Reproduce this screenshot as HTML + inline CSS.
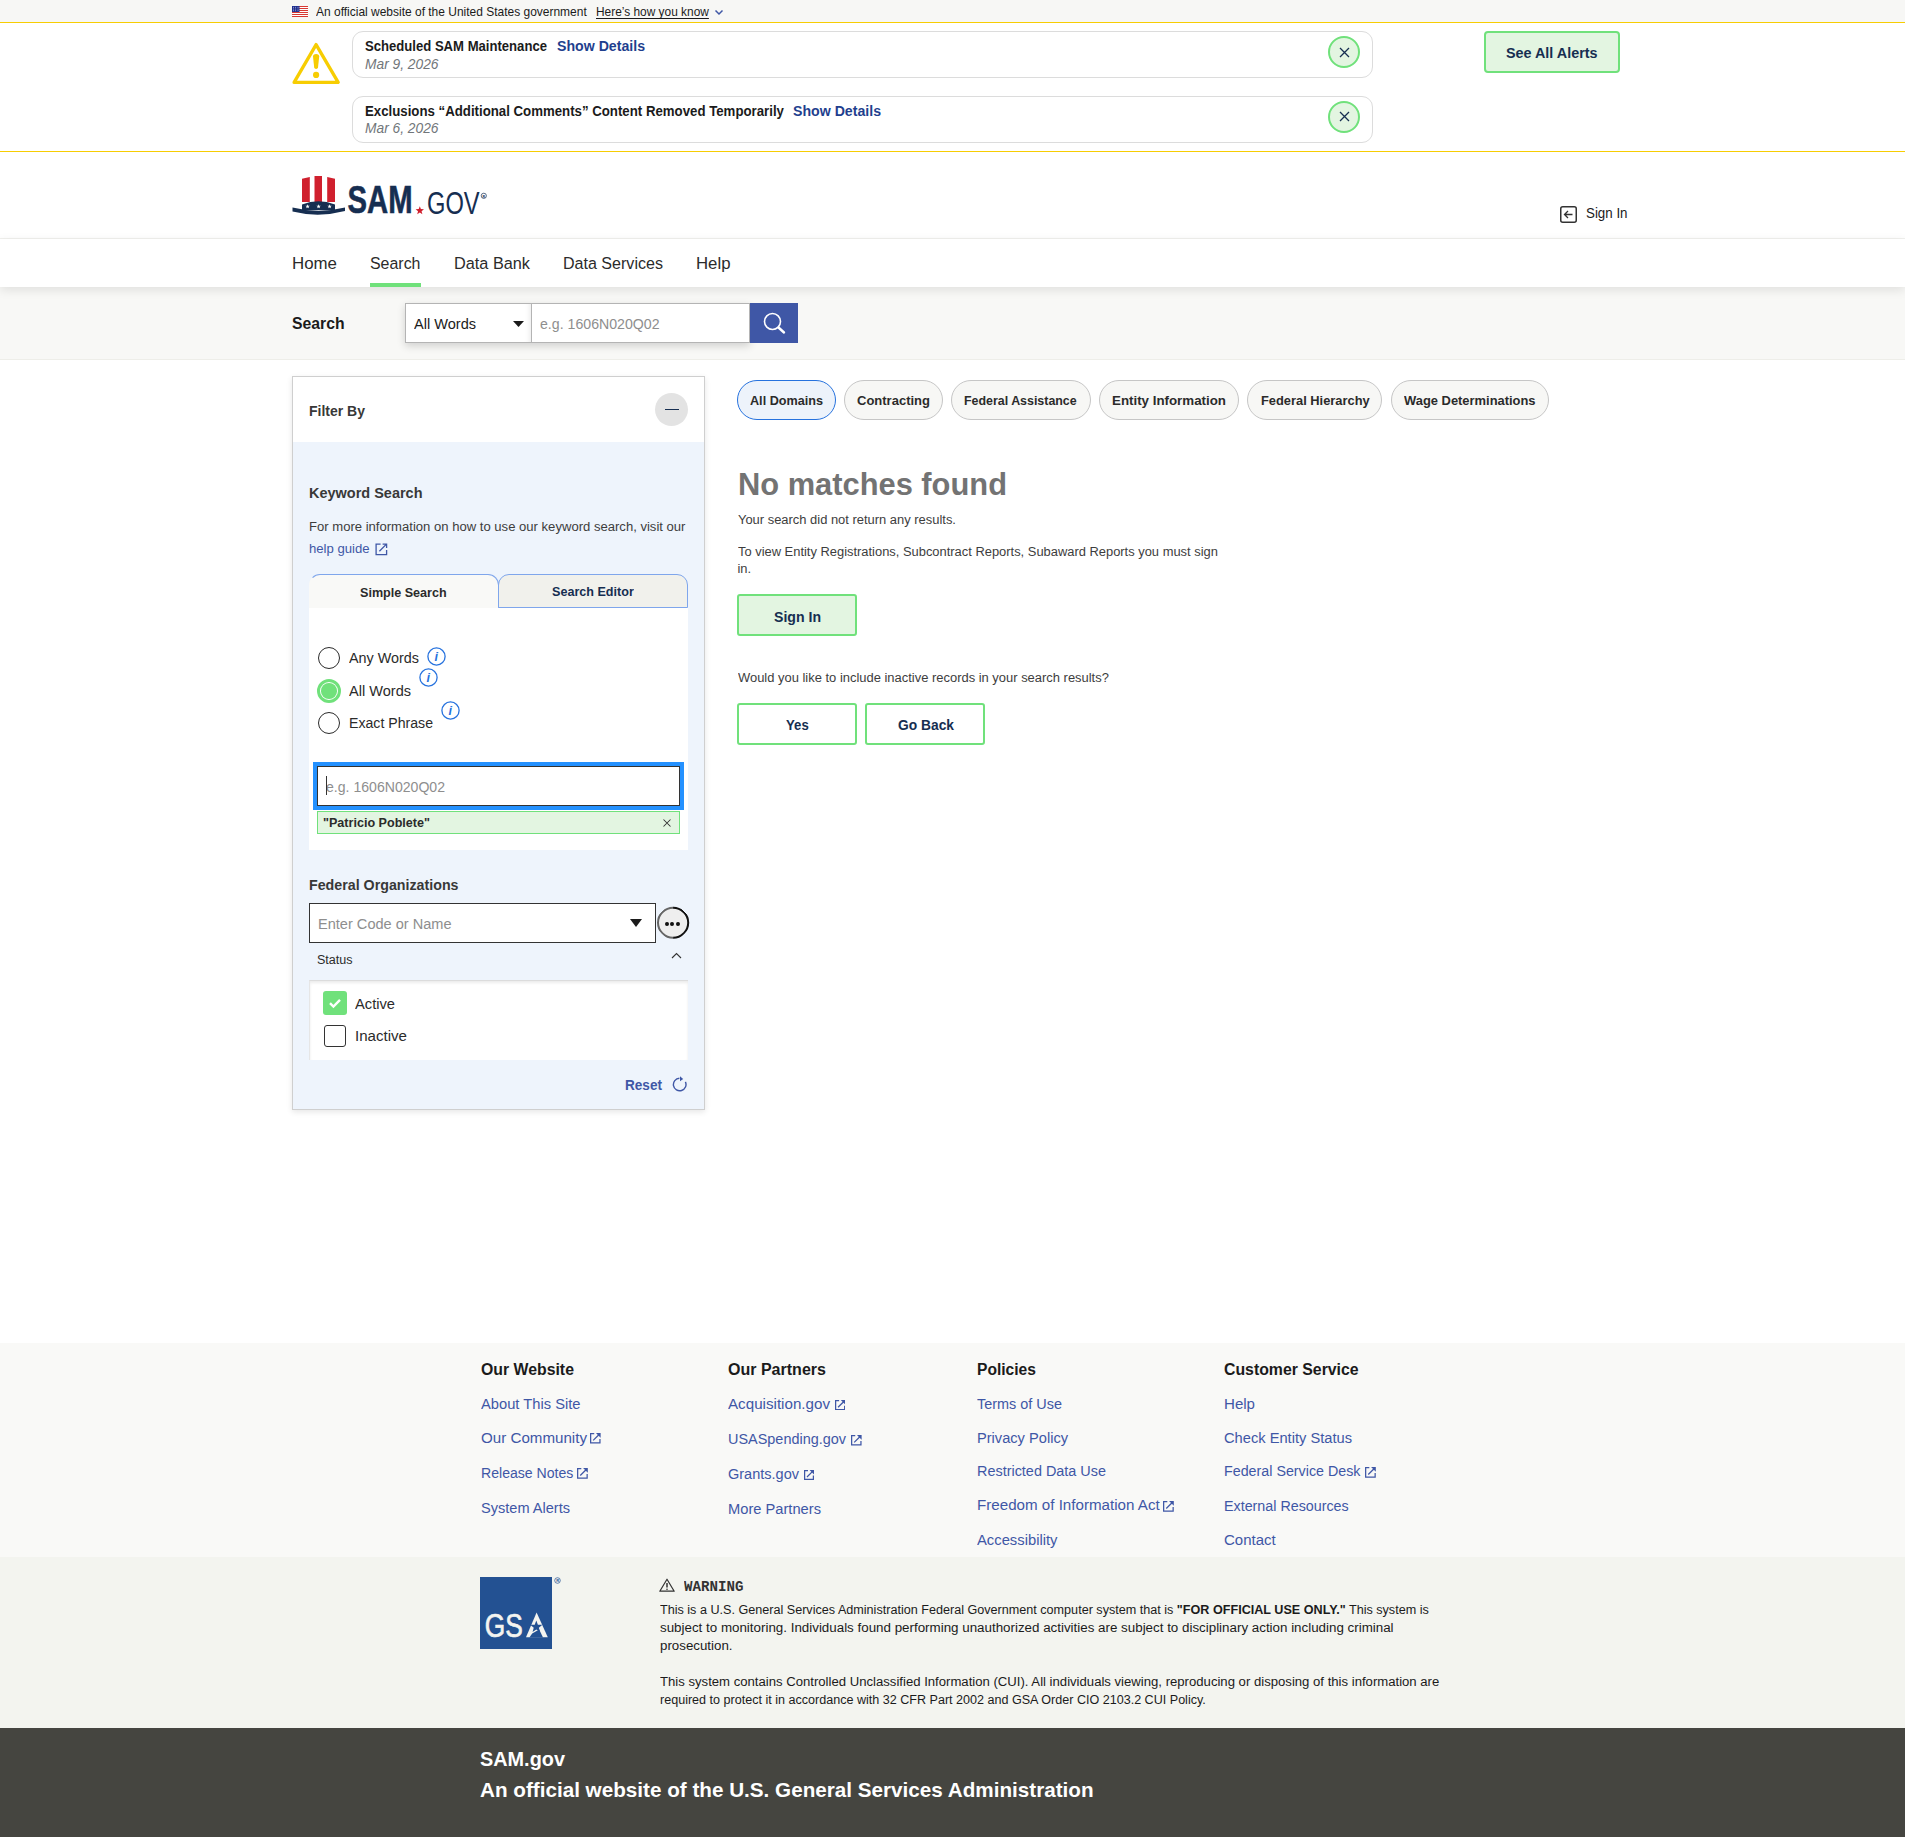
<!DOCTYPE html>
<html><head><meta charset="utf-8"><style>
html,body{margin:0;padding:0}
body{width:1905px;height:1837px;position:relative;overflow:hidden;background:#fff;font-family:"Liberation Sans",sans-serif}
.t{position:absolute;white-space:pre}
.b{position:absolute}
</style></head><body>
<div class="b" style="left:0.0px;top:0.0px;width:1905.0px;height:22.0px;background:#f7f7f5"></div>
<div class="b" style="left:0.0px;top:22.0px;width:1905.0px;height:1.0px;background:#f7cd02"></div>
<svg class="b" style="left:292.0px;top:6.0px;" width="16.0" height="11.0" viewBox="0 0 16.0 11.0"><rect width="16" height="11" fill="#fff"/><rect y="0" width="16" height="1" fill="#d83933"/><rect y="2" width="16" height="1" fill="#d83933"/><rect y="4" width="16" height="1" fill="#d83933"/><rect y="6" width="16" height="1" fill="#d83933"/><rect y="8" width="16" height="1" fill="#d83933"/><rect y="10" width="16" height="1" fill="#d83933"/><rect width="7.5" height="6" fill="#1f2f8f"/><circle cx="1.4" cy="1.2" r="0.45" fill="#fff"/><circle cx="3.6999999999999997" cy="1.2" r="0.45" fill="#fff"/><circle cx="6.0" cy="1.2" r="0.45" fill="#fff"/><circle cx="1.4" cy="3.0" r="0.45" fill="#fff"/><circle cx="3.6999999999999997" cy="3.0" r="0.45" fill="#fff"/><circle cx="6.0" cy="3.0" r="0.45" fill="#fff"/><circle cx="1.4" cy="4.8" r="0.45" fill="#fff"/><circle cx="3.6999999999999997" cy="4.8" r="0.45" fill="#fff"/><circle cx="6.0" cy="4.8" r="0.45" fill="#fff"/></svg>
<div class="t" style="left:316.0px;top:6.0px;font:normal normal 11.98px/11.98px 'Liberation Sans';color:#1b1b1b;transform:scaleX(1.0007);transform-origin:0 0;">An official website of the United States government</div>
<div class="t" style="left:596.0px;top:6.0px;font:normal normal 11.98px/11.98px 'Liberation Sans';color:#1b1b1b;transform:scaleX(0.9943);transform-origin:0 0;text-decoration:underline;text-underline-offset:2px">Here’s how you know</div>
<svg class="b" style="left:714.0px;top:9.0px;" width="10.0" height="7.0" viewBox="0 0 10.0 7.0"><path d="M1.5 1.5 L5 5 L8.5 1.5" fill="none" stroke="#3f57a6" stroke-width="1.5"/></svg>
<div class="b" style="left:0.0px;top:151.0px;width:1905.0px;height:1.0px;background:#f7cd02"></div>
<svg class="b" style="left:292.0px;top:41.0px;" width="49.0" height="44.0" viewBox="0 0 49.0 44.0"><path d="M24.1 3.6 L46.2 41.4 L2.1 41.4 Z" fill="none" stroke="#f7cd02" stroke-width="3.3" stroke-linejoin="round"/><path d="M21 15.6 Q21 13 24.1 13 Q27.2 13 27.2 15.6 L26 26.6 Q25.8 28 24.1 28 Q22.4 28 22.2 26.6 Z" fill="#f7cd02"/><circle cx="24.1" cy="33.9" r="3.1" fill="#f7cd02"/></svg>
<div class="b" style="left:352.0px;top:31.0px;width:1021.0px;height:47.0px;border:1px solid #dcdcdc;border-radius:11px;box-sizing:border-box"></div>
<div class="t" style="left:365.0px;top:40.0px;font:normal bold 13.83px/13.83px 'Liberation Sans';color:#1b1b1b;transform:scaleX(0.9473);transform-origin:0 0;">Scheduled SAM Maintenance</div>
<div class="t" style="left:556.8px;top:40.0px;font:normal bold 13.83px/13.83px 'Liberation Sans';color:#1f3f8e;transform:scaleX(1.0224);transform-origin:0 0;">Show Details</div>
<div class="t" style="left:365.0px;top:58.0px;font:italic normal 13.83px/13.83px 'Liberation Sans';color:#71767a;transform:scaleX(0.9959);transform-origin:0 0;">Mar 9, 2026</div>
<div class="b" style="left:1328.0px;top:36.0px;width:32.0px;height:32.0px;border:2px solid #70e17b;border-radius:50%;box-sizing:border-box;background:#e3f5e1"></div>
<svg class="b" style="left:1338.5px;top:46.5px;" width="11.0" height="11.0" viewBox="0 0 11.0 11.0"><path d="M1 1 L10 10 M10 1 L1 10" stroke="#162e51" stroke-width="1.3"/></svg>
<div class="b" style="left:352.0px;top:95.5px;width:1021.0px;height:47.0px;border:1px solid #dcdcdc;border-radius:11px;box-sizing:border-box"></div>
<div class="t" style="left:365.0px;top:105.0px;font:normal bold 13.83px/13.83px 'Liberation Sans';color:#1b1b1b;transform:scaleX(0.9571);transform-origin:0 0;">Exclusions “Additional Comments” Content Removed Temporarily</div>
<div class="t" style="left:792.8px;top:105.0px;font:normal bold 13.83px/13.83px 'Liberation Sans';color:#1f3f8e;transform:scaleX(1.0224);transform-origin:0 0;">Show Details</div>
<div class="t" style="left:365.0px;top:122.0px;font:italic normal 13.83px/13.83px 'Liberation Sans';color:#71767a;transform:scaleX(0.9959);transform-origin:0 0;">Mar 6, 2026</div>
<div class="b" style="left:1328.0px;top:100.5px;width:32.0px;height:32.0px;border:2px solid #70e17b;border-radius:50%;box-sizing:border-box;background:#e3f5e1"></div>
<svg class="b" style="left:1338.5px;top:111.0px;" width="11.0" height="11.0" viewBox="0 0 11.0 11.0"><path d="M1 1 L10 10 M10 1 L1 10" stroke="#162e51" stroke-width="1.3"/></svg>
<div class="b" style="left:1484.0px;top:31.0px;width:136.0px;height:42.0px;border:2px solid #70e17b;border-radius:4px;box-sizing:border-box;background:#e3f5e1"></div>
<div class="t" style="left:1506.4px;top:46.0px;font:normal bold 14.75px/14.75px 'Liberation Sans';color:#162e51;transform:scaleX(0.9734);transform-origin:0 0;">See All Alerts</div>
<svg class="b" style="left:292.0px;top:165.0px;" width="200.0" height="55.0" viewBox="0 0 200.0 55.0"><path d="M10 13.8 L17.8 12 V37 H10 Z" fill="#d0202e"/><path d="M22.5 11 H30 V37 H22.5 Z" fill="#d0202e"/><path d="M35.2 12 L43 13.8 V37 H35.2 Z" fill="#d0202e"/><path d="M10 45 V39.5 Q26.5 33 43 39.5 V45 Z" fill="#162e51"/><path d="M0.5 42.5 Q26.5 49 53 42.5 L53 46 Q26.5 53 0.5 46.5 Z" fill="#162e51"/><polygon points="15.60,39.20 16.17,40.72 17.79,40.79 16.52,41.80 16.95,43.36 15.60,42.47 14.25,43.36 14.68,41.80 13.41,40.79 15.03,40.72" fill="#fff"/><polygon points="26.60,39.20 27.17,40.72 28.79,40.79 27.52,41.80 27.95,43.36 26.60,42.47 25.25,43.36 25.68,41.80 24.41,40.79 26.03,40.72" fill="#fff"/><polygon points="37.60,39.20 38.17,40.72 39.79,40.79 38.52,41.80 38.95,43.36 37.60,42.47 36.25,43.36 36.68,41.80 35.41,40.79 37.03,40.72" fill="#fff"/><polygon points="127.80,41.20 128.89,44.10 131.98,44.24 129.56,46.17 130.39,49.16 127.80,47.45 125.21,49.16 126.04,46.17 123.62,44.24 126.71,44.10" fill="#d0202e"/><text x="55.6" y="47.6" font-family="Liberation Sans" font-weight="bold" font-size="39.5" fill="#162e51" stroke="#162e51" stroke-width="0.6" textLength="65" lengthAdjust="spacingAndGlyphs">SAM</text><text x="135" y="48.5" font-family="Liberation Sans" font-size="31" fill="#162e51" stroke="#fff" stroke-width="0.9" paint-order="stroke" textLength="52.6" lengthAdjust="spacingAndGlyphs">GOV</text><circle cx="191.8" cy="30.8" r="2.6" fill="none" stroke="#162e51" stroke-width="0.7"/><text x="190.4" y="32.6" font-family="Liberation Sans" font-weight="bold" font-size="3.6" fill="#162e51">R</text></svg>
<svg class="b" style="left:1560.0px;top:206.0px;" width="17.0" height="17.0" viewBox="0 0 17.0 17.0"><rect x="0.75" y="0.75" width="15.5" height="15.5" rx="2" fill="none" stroke="#333" stroke-width="1.5"/><path d="M12.5 8.5 H4.5 M8 5 L4.5 8.5 L8 12" fill="none" stroke="#333" stroke-width="1.3"/></svg>
<div class="t" style="left:1586.0px;top:206.0px;font:normal normal 14.75px/14.75px 'Liberation Sans';color:#1b1b1b;transform:scaleX(0.9037);transform-origin:0 0;">Sign In</div>
<div class="b" style="left:0.0px;top:238.0px;width:1905.0px;height:1.0px;background:#f1f1ee"></div>
<div class="b" style="left:0.0px;top:239.0px;width:1905.0px;height:48.0px;background:#fff;box-shadow:0 3px 10px rgba(0,0,0,0.10);z-index:2"></div>
<div class="t" style="left:292.0px;top:256.0px;font:normal normal 16.59px/16.59px 'Liberation Sans';color:#2b2b2b;transform:scaleX(1.0169);transform-origin:0 0;z-index:3">Home</div>
<div class="t" style="left:370.0px;top:256.0px;font:normal normal 16.59px/16.59px 'Liberation Sans';color:#2b2b2b;transform:scaleX(0.9607);transform-origin:0 0;z-index:3">Search</div>
<div class="t" style="left:454.0px;top:256.0px;font:normal normal 16.59px/16.59px 'Liberation Sans';color:#2b2b2b;transform:scaleX(0.9811);transform-origin:0 0;z-index:3">Data Bank</div>
<div class="t" style="left:563.0px;top:256.0px;font:normal normal 16.59px/16.59px 'Liberation Sans';color:#2b2b2b;transform:scaleX(0.9684);transform-origin:0 0;z-index:3">Data Services</div>
<div class="t" style="left:696.0px;top:256.0px;font:normal normal 16.59px/16.59px 'Liberation Sans';color:#2b2b2b;transform:scaleX(1.0111);transform-origin:0 0;z-index:3">Help</div>
<div class="b" style="left:370.0px;top:283.0px;width:50.5px;height:4.0px;background:#70e17b;z-index:3"></div>
<div class="b" style="left:0.0px;top:287.0px;width:1905.0px;height:73.0px;background:#f8f8f6;border-bottom:1px solid #eeeee9;box-sizing:border-box"></div>
<div class="t" style="left:292.0px;top:316.0px;font:normal bold 16.59px/16.59px 'Liberation Sans';color:#1b1b1b;transform:scaleX(0.9506);transform-origin:0 0;">Search</div>
<div class="b" style="left:405.0px;top:303.0px;width:345.0px;height:39.5px;box-shadow:0 3px 8px rgba(0,0,0,0.16)"></div>
<div class="b" style="left:405.0px;top:303.0px;width:127.0px;height:39.5px;background:#fff;border:1px solid #b4b4b4;box-sizing:border-box;box-shadow:inset -6px 0 6px -6px rgba(0,0,0,0.12)"></div>
<div class="t" style="left:414.0px;top:317.0px;font:normal normal 14.75px/14.75px 'Liberation Sans';color:#1b1b1b;transform:scaleX(0.9866);transform-origin:0 0;">All Words</div>
<svg class="b" style="left:513.0px;top:321.0px;" width="11.0" height="6.0" viewBox="0 0 11.0 6.0"><path d="M0 0 H11 L5.5 6 Z" fill="#1b1b1b"/></svg>
<div class="b" style="left:532.0px;top:303.0px;width:218.0px;height:39.5px;background:#fff;border:1px solid #b4b4b4;border-left:0;box-sizing:border-box"></div>
<div class="t" style="left:540.0px;top:317.0px;font:normal normal 14.75px/14.75px 'Liberation Sans';color:#8e8e8e;transform:scaleX(0.9594);transform-origin:0 0;">e.g. 1606N020Q02</div>
<div class="b" style="left:750.0px;top:303.0px;width:48.0px;height:40.0px;background:#3f57a6"></div>
<svg class="b" style="left:762.0px;top:311.0px;" width="26.0" height="26.0" viewBox="0 0 26.0 26.0"><circle cx="10.5" cy="10.5" r="8" fill="none" stroke="#fff" stroke-width="1.6"/><path d="M16.5 16.5 L22 21.5" stroke="#fff" stroke-width="2.4" stroke-linecap="round"/></svg>
<div class="b" style="left:292.0px;top:376.0px;width:413.0px;height:734.0px;border:1px solid #cfcfcf;box-sizing:border-box;background:#fff;box-shadow:0 2px 6px rgba(0,0,0,0.10)"></div>
<div class="b" style="left:293.0px;top:442.0px;width:411.0px;height:667.0px;background:#eef4fc"></div>
<div class="t" style="left:309.3px;top:404.0px;font:normal bold 14.75px/14.75px 'Liberation Sans';color:#383838;transform:scaleX(0.9489);transform-origin:0 0;">Filter By</div>
<div class="b" style="left:655.0px;top:393.0px;width:33.0px;height:33.0px;background:#e3e3e3;border-radius:50%"></div>
<div class="b" style="left:665.0px;top:408.5px;width:14.0px;height:1.5px;background:#162e51"></div>
<div class="t" style="left:309.0px;top:486.0px;font:normal bold 14.75px/14.75px 'Liberation Sans';color:#383838;transform:scaleX(0.9819);transform-origin:0 0;">Keyword Search</div>
<div class="t" style="left:309.0px;top:521.0px;font:normal normal 12.91px/12.91px 'Liberation Sans';color:#3d3d3d;transform:scaleX(1.0132);transform-origin:0 0;">For more information on how to use our keyword search, visit our</div>
<div class="t" style="left:309.0px;top:543.0px;font:normal normal 12.91px/12.91px 'Liberation Sans';color:#3f57a6;transform:scaleX(1.0171);transform-origin:0 0;">help guide</div>
<svg class="b" style="left:374.5px;top:542.5px;" width="13.0" height="13.0" viewBox="0 0 13.0 13.0"><path d="M5.6 1.1 H1.1 V11.6 H11.6 V7" fill="none" stroke="#3f57a6" stroke-width="1.3"/><path d="M4.4 8.2 L11.2 1.4 M7.6 1.1 H11.6 V5.1" fill="none" stroke="#3f57a6" stroke-width="1.3"/></svg>
<div class="b" style="left:309.0px;top:574.0px;width:189.5px;height:34.0px;background:#f9f9f7;border:1px solid #7fa6ec;border-left-color:transparent;border-bottom:0;border-radius:11px 11px 0 0;box-sizing:border-box"></div>
<div class="b" style="left:497.5px;top:574.0px;width:190.5px;height:34.0px;background:#f1f1ec;border:1px solid #7fa6ec;border-radius:11px 11px 0 0;box-sizing:border-box"></div>
<div class="t" style="left:360.0px;top:587.0px;font:normal bold 12.91px/12.91px 'Liberation Sans';color:#2b2b2b;transform:scaleX(0.9744);transform-origin:0 0;">Simple Search</div>
<div class="t" style="left:552.0px;top:586.0px;font:normal bold 12.91px/12.91px 'Liberation Sans';color:#162e51;transform:scaleX(0.9745);transform-origin:0 0;">Search Editor</div>
<div class="b" style="left:309.0px;top:608.0px;width:378.5px;height:242.0px;background:#fff"></div>
<div class="b" style="left:318.0px;top:647.0px;width:22.0px;height:22.0px;border:1.5px solid #2b2b2b;border-radius:50%;box-sizing:border-box;background:#fff"></div>
<div class="t" style="left:349.0px;top:651.0px;font:normal normal 14.75px/14.75px 'Liberation Sans';color:#2b2b2b;transform:scaleX(0.9741);transform-origin:0 0;">Any Words</div>
<svg class="b" style="left:426.5px;top:646.5px;" width="19.0" height="19.0" viewBox="0 0 19.0 19.0"><circle cx="9.5" cy="9.5" r="8.6" fill="none" stroke="#2672de" stroke-width="1.3"/><text x="7.6" y="14.2" font-family="Liberation Sans" font-style="italic" font-weight="bold" font-size="12.5" fill="#2672de">i</text></svg>
<div class="b" style="left:317.0px;top:679.0px;width:24.0px;height:24.0px;border:3px solid #70e17b;border-radius:50%;box-sizing:border-box;background:#fff"></div>
<div class="b" style="left:321.2px;top:683.2px;width:15.6px;height:15.6px;background:#70e17b;border-radius:50%"></div>
<div class="t" style="left:349.0px;top:684.0px;font:normal normal 14.75px/14.75px 'Liberation Sans';color:#2b2b2b;transform:scaleX(0.9866);transform-origin:0 0;">All Words</div>
<svg class="b" style="left:418.5px;top:668.0px;" width="19.0" height="19.0" viewBox="0 0 19.0 19.0"><circle cx="9.5" cy="9.5" r="8.6" fill="none" stroke="#2672de" stroke-width="1.3"/><text x="7.6" y="14.2" font-family="Liberation Sans" font-style="italic" font-weight="bold" font-size="12.5" fill="#2672de">i</text></svg>
<div class="b" style="left:318.0px;top:711.8px;width:22.0px;height:22.0px;border:1.5px solid #2b2b2b;border-radius:50%;box-sizing:border-box;background:#fff"></div>
<div class="t" style="left:349.0px;top:716.0px;font:normal normal 14.75px/14.75px 'Liberation Sans';color:#2b2b2b;transform:scaleX(0.9576);transform-origin:0 0;">Exact Phrase</div>
<svg class="b" style="left:440.5px;top:700.5px;" width="19.0" height="19.0" viewBox="0 0 19.0 19.0"><circle cx="9.5" cy="9.5" r="8.6" fill="none" stroke="#2672de" stroke-width="1.3"/><text x="7.6" y="14.2" font-family="Liberation Sans" font-style="italic" font-weight="bold" font-size="12.5" fill="#2672de">i</text></svg>
<div class="b" style="left:313.0px;top:762.0px;width:371.0px;height:47.5px;background:#2491ff"></div>
<div class="b" style="left:316.8px;top:766.0px;width:363.7px;height:40.0px;background:#fff;border:1.5px solid #333;box-sizing:border-box"></div>
<div class="t" style="left:326.0px;top:780.0px;font:normal normal 14.75px/14.75px 'Liberation Sans';color:#8e8e8e;transform:scaleX(0.9546);transform-origin:0 0;">e.g. 1606N020Q02</div>
<div class="b" style="left:325.5px;top:776.0px;width:1.2px;height:19.0px;background:#333"></div>
<div class="b" style="left:317.0px;top:810.5px;width:363.0px;height:23.0px;background:#e3f5e1;border:1px solid #70e17b;box-sizing:border-box"></div>
<div class="t" style="left:323.4px;top:817.0px;font:normal bold 12.91px/12.91px 'Liberation Sans';color:#2b2b2b;transform:scaleX(0.9744);transform-origin:0 0;">"Patricio Poblete"</div>
<svg class="b" style="left:663.0px;top:819.0px;" width="8.0" height="8.0" viewBox="0 0 8.0 8.0"><path d="M0.5 0.5 L7.5 7.5 M7.5 0.5 L0.5 7.5" stroke="#333" stroke-width="1.05"/></svg>
<div class="t" style="left:309.0px;top:878.0px;font:normal bold 14.75px/14.75px 'Liberation Sans';color:#383838;transform:scaleX(0.9651);transform-origin:0 0;">Federal Organizations</div>
<div class="b" style="left:309.0px;top:903.0px;width:347.0px;height:39.5px;background:#fff;border:1.5px solid #333;box-sizing:border-box"></div>
<div class="t" style="left:318.0px;top:917.0px;font:normal normal 14.75px/14.75px 'Liberation Sans';color:#8e8e8e;transform:scaleX(0.9876);transform-origin:0 0;">Enter Code or Name</div>
<svg class="b" style="left:630.0px;top:919.0px;" width="12.0" height="8.0" viewBox="0 0 12.0 8.0"><path d="M0 0 H12 L6 8 Z" fill="#1b1b1b"/></svg>
<div class="b" style="left:656.5px;top:907.0px;width:31.5px;height:31.5px;background:#eeeeee;border:2px solid;border-color:#666 #111 #111 #666;border-radius:50%;box-sizing:border-box;transform:rotate(-45deg)"></div>
<div class="b" style="left:664.8px;top:922.3px;width:3.8px;height:3.8px;background:#111;border-radius:50%"></div>
<div class="b" style="left:670.3px;top:922.3px;width:3.8px;height:3.8px;background:#111;border-radius:50%"></div>
<div class="b" style="left:675.8px;top:922.3px;width:3.8px;height:3.8px;background:#111;border-radius:50%"></div>
<div class="t" style="left:317.4px;top:954.0px;font:normal normal 12.91px/12.91px 'Liberation Sans';color:#2b2b2b;transform:scaleX(0.9727);transform-origin:0 0;">Status</div>
<svg class="b" style="left:670.0px;top:951.0px;" width="13.0" height="9.0" viewBox="0 0 13.0 9.0"><path d="M2 7 L6.5 2.5 L11 7" fill="none" stroke="#333" stroke-width="1.1"/></svg>
<div class="b" style="left:309.0px;top:979.5px;width:378.5px;height:80.0px;background:#fff;border-top:1px solid #dcdcdc;border-left:1px solid #e6e6e6;box-sizing:border-box;box-shadow:inset 0 2px 3px rgba(0,0,0,0.08)"></div>
<div class="b" style="left:323.0px;top:991.0px;width:24.0px;height:24.0px;background:#70e17b;border-radius:3px"></div>
<svg class="b" style="left:327.0px;top:995.0px;" width="16.0" height="16.0" viewBox="0 0 16.0 16.0"><path d="M3 8.2 L6.4 11.5 L13 4.8" fill="none" stroke="#fff" stroke-width="2.4"/></svg>
<div class="t" style="left:355.0px;top:997.0px;font:normal normal 14.75px/14.75px 'Liberation Sans';color:#2b2b2b;transform:scaleX(0.9958);transform-origin:0 0;">Active</div>
<div class="b" style="left:324.0px;top:1025.0px;width:22.0px;height:22.0px;border:1.5px solid #333;border-radius:3px;box-sizing:border-box;background:#fff"></div>
<div class="t" style="left:355.0px;top:1029.0px;font:normal normal 14.75px/14.75px 'Liberation Sans';color:#2b2b2b;transform:scaleX(1.0229);transform-origin:0 0;">Inactive</div>
<div class="t" style="left:625.0px;top:1078.0px;font:normal bold 14.75px/14.75px 'Liberation Sans';color:#3f57a6;transform:scaleX(0.9210);transform-origin:0 0;">Reset</div>
<svg class="b" style="left:671.0px;top:1075.0px;" width="17.0" height="17.0" viewBox="0 0 17.0 17.0"><path d="M14.41 6.84 A6.3 6.3 0 1 1 8.4 3.2" fill="none" stroke="#3f57a6" stroke-width="1.4"/><path d="M9 1.2 L12.2 4 L9 6.2 Z" fill="#3f57a6"/></svg>
<div class="b" style="left:737.0px;top:380.0px;width:98.7px;height:40.0px;background:#edf3fb;border:1.5px solid #2672de;border-radius:20px;box-sizing:border-box"></div>
<div class="t" style="left:750.0px;top:395.0px;font:normal bold 12.91px/12.91px 'Liberation Sans';color:#2b2b2b;transform:scaleX(0.9785);transform-origin:0 0;">All Domains</div>
<div class="b" style="left:844.0px;top:380.0px;width:98.5px;height:40.0px;background:#f7f7f5;border:1px solid #c6c6c6;border-radius:20px;box-sizing:border-box"></div>
<div class="t" style="left:857.3px;top:395.0px;font:normal bold 12.91px/12.91px 'Liberation Sans';color:#2b2b2b;transform:scaleX(1.0078);transform-origin:0 0;">Contracting</div>
<div class="b" style="left:951.0px;top:380.0px;width:139.5px;height:40.0px;background:#f7f7f5;border:1px solid #c6c6c6;border-radius:20px;box-sizing:border-box"></div>
<div class="t" style="left:964.3px;top:395.0px;font:normal bold 12.91px/12.91px 'Liberation Sans';color:#2b2b2b;transform:scaleX(0.9615);transform-origin:0 0;">Federal Assistance</div>
<div class="b" style="left:1099.0px;top:380.0px;width:139.7px;height:40.0px;background:#f7f7f5;border:1px solid #c6c6c6;border-radius:20px;box-sizing:border-box"></div>
<div class="t" style="left:1111.8px;top:395.0px;font:normal bold 12.91px/12.91px 'Liberation Sans';color:#2b2b2b;transform:scaleX(1.0321);transform-origin:0 0;">Entity Information</div>
<div class="b" style="left:1247.3px;top:380.0px;width:135.2px;height:40.0px;background:#f7f7f5;border:1px solid #c6c6c6;border-radius:20px;box-sizing:border-box"></div>
<div class="t" style="left:1260.7px;top:395.0px;font:normal bold 12.91px/12.91px 'Liberation Sans';color:#2b2b2b;transform:scaleX(0.9966);transform-origin:0 0;">Federal Hierarchy</div>
<div class="b" style="left:1391.2px;top:380.0px;width:157.5px;height:40.0px;background:#f7f7f5;border:1px solid #c6c6c6;border-radius:20px;box-sizing:border-box"></div>
<div class="t" style="left:1403.8px;top:395.0px;font:normal bold 12.91px/12.91px 'Liberation Sans';color:#2b2b2b;transform:scaleX(1.0006);transform-origin:0 0;">Wage Determinations</div>
<div class="t" style="left:738.0px;top:470.0px;font:normal bold 30.88px/30.88px 'Liberation Sans';color:#737373;transform:scaleX(0.9987);transform-origin:0 0;">No matches found</div>
<div class="t" style="left:737.5px;top:514.0px;font:normal normal 12.91px/12.91px 'Liberation Sans';color:#3d3d3d;transform:scaleX(1.0015);transform-origin:0 0;">Your search did not return any results.</div>
<div class="t" style="left:737.5px;top:546.0px;font:normal normal 12.91px/12.91px 'Liberation Sans';color:#3d3d3d;transform:scaleX(0.9999);transform-origin:0 0;">To view Entity Registrations, Subcontract Reports, Subaward Reports you must sign</div>
<div class="t" style="left:737.5px;top:563.0px;font:normal normal 12.91px/12.91px 'Liberation Sans';color:#3d3d3d;">in.</div>
<div class="b" style="left:737.0px;top:594.0px;width:119.5px;height:41.5px;background:#e3f5e1;border:2px solid #70e17b;border-radius:3px;box-sizing:border-box"></div>
<div class="t" style="left:773.8px;top:610.0px;font:normal bold 14.75px/14.75px 'Liberation Sans';color:#162e51;transform:scaleX(0.9560);transform-origin:0 0;">Sign In</div>
<div class="t" style="left:737.5px;top:672.0px;font:normal normal 12.91px/12.91px 'Liberation Sans';color:#3d3d3d;transform:scaleX(1.0026);transform-origin:0 0;">Would you like to include inactive records in your search results?</div>
<div class="b" style="left:737.0px;top:703.4px;width:119.5px;height:41.5px;background:#fff;border:2px solid #70e17b;border-radius:3px;box-sizing:border-box"></div>
<div class="t" style="left:786.0px;top:718.0px;font:normal bold 14.75px/14.75px 'Liberation Sans';color:#162e51;transform:scaleX(0.8926);transform-origin:0 0;">Yes</div>
<div class="b" style="left:865.0px;top:703.4px;width:119.8px;height:41.5px;background:#fff;border:2px solid #70e17b;border-radius:3px;box-sizing:border-box"></div>
<div class="t" style="left:897.5px;top:718.0px;font:normal bold 14.75px/14.75px 'Liberation Sans';color:#162e51;transform:scaleX(0.9358);transform-origin:0 0;">Go Back</div>
<div class="b" style="left:0.0px;top:1343.0px;width:1905.0px;height:214.0px;background:#f9f9f7"></div>
<div class="b" style="left:0.0px;top:1557.0px;width:1905.0px;height:171.0px;background:#f3f4ef"></div>
<div class="b" style="left:0.0px;top:1728.0px;width:1905.0px;height:109.0px;background:#454540"></div>
<div class="t" style="left:480.5px;top:1362.0px;font:normal bold 16.59px/16.59px 'Liberation Sans';color:#1b1b1b;transform:scaleX(0.9547);transform-origin:0 0;">Our Website</div>
<div class="t" style="left:480.5px;top:1397.0px;font:normal normal 14.75px/14.75px 'Liberation Sans';color:#3f57a6;transform:scaleX(0.9974);transform-origin:0 0;">About This Site</div>
<div class="t" style="left:480.5px;top:1431.0px;font:normal normal 14.75px/14.75px 'Liberation Sans';color:#3f57a6;transform:scaleX(1.0264);transform-origin:0 0;">Our Community</div>
<svg class="b" style="left:590.4px;top:1433.0px;" width="11.1" height="11.1" viewBox="0 0 11.1 11.1"><path d="M4.24 0.64 H0.64 V9.96 H9.96 V5.94" fill="none" stroke="#3f57a6" stroke-width="1.25"/><path d="M3.18 7.42 L9.12 1.48" fill="none" stroke="#3f57a6" stroke-width="1.25"/><path d="M5.94 0 H10.60 V4.66 Z" fill="#3f57a6"/></svg>
<div class="t" style="left:480.5px;top:1466.0px;font:normal normal 14.75px/14.75px 'Liberation Sans';color:#3f57a6;transform:scaleX(0.9551);transform-origin:0 0;">Release Notes</div>
<svg class="b" style="left:577.0px;top:1467.8px;" width="11.3" height="11.3" viewBox="0 0 11.3 11.3"><path d="M4.32 0.65 H0.65 V10.15 H10.15 V6.05" fill="none" stroke="#3f57a6" stroke-width="1.25"/><path d="M3.24 7.56 L9.29 1.51" fill="none" stroke="#3f57a6" stroke-width="1.25"/><path d="M6.05 0 H10.80 V4.75 Z" fill="#3f57a6"/></svg>
<div class="t" style="left:480.5px;top:1501.0px;font:normal normal 14.75px/14.75px 'Liberation Sans';color:#3f57a6;transform:scaleX(0.9871);transform-origin:0 0;">System Alerts</div>
<div class="t" style="left:728.2px;top:1362.0px;font:normal bold 16.59px/16.59px 'Liberation Sans';color:#1b1b1b;transform:scaleX(0.9663);transform-origin:0 0;">Our Partners</div>
<div class="t" style="left:728.2px;top:1397.0px;font:normal normal 14.75px/14.75px 'Liberation Sans';color:#3f57a6;transform:scaleX(1.0281);transform-origin:0 0;">Acquisition.gov</div>
<svg class="b" style="left:834.5px;top:1399.6px;" width="10.8" height="10.8" viewBox="0 0 10.8 10.8"><path d="M4.12 0.62 H0.62 V9.68 H9.68 V5.77" fill="none" stroke="#3f57a6" stroke-width="1.25"/><path d="M3.09 7.21 L8.86 1.44" fill="none" stroke="#3f57a6" stroke-width="1.25"/><path d="M5.77 0 H10.30 V4.53 Z" fill="#3f57a6"/></svg>
<div class="t" style="left:728.2px;top:1432.0px;font:normal normal 14.75px/14.75px 'Liberation Sans';color:#3f57a6;transform:scaleX(0.9789);transform-origin:0 0;">USASpending.gov</div>
<svg class="b" style="left:851.0px;top:1435.0px;" width="11.1" height="11.1" viewBox="0 0 11.1 11.1"><path d="M4.24 0.64 H0.64 V9.96 H9.96 V5.94" fill="none" stroke="#3f57a6" stroke-width="1.25"/><path d="M3.18 7.42 L9.12 1.48" fill="none" stroke="#3f57a6" stroke-width="1.25"/><path d="M5.94 0 H10.60 V4.66 Z" fill="#3f57a6"/></svg>
<div class="t" style="left:728.2px;top:1467.0px;font:normal normal 14.75px/14.75px 'Liberation Sans';color:#3f57a6;transform:scaleX(0.9841);transform-origin:0 0;">Grants.gov</div>
<svg class="b" style="left:803.8px;top:1470.0px;" width="10.5" height="10.5" viewBox="0 0 10.5 10.5"><path d="M4.00 0.60 H0.60 V9.40 H9.40 V5.60" fill="none" stroke="#3f57a6" stroke-width="1.25"/><path d="M3.00 7.00 L8.60 1.40" fill="none" stroke="#3f57a6" stroke-width="1.25"/><path d="M5.60 0 H10.00 V4.40 Z" fill="#3f57a6"/></svg>
<div class="t" style="left:728.2px;top:1502.0px;font:normal normal 14.75px/14.75px 'Liberation Sans';color:#3f57a6;transform:scaleX(0.9952);transform-origin:0 0;">More Partners</div>
<div class="t" style="left:976.5px;top:1362.0px;font:normal bold 16.59px/16.59px 'Liberation Sans';color:#1b1b1b;transform:scaleX(0.9409);transform-origin:0 0;">Policies</div>
<div class="t" style="left:976.5px;top:1397.0px;font:normal normal 14.75px/14.75px 'Liberation Sans';color:#3f57a6;transform:scaleX(0.9784);transform-origin:0 0;">Terms of Use</div>
<div class="t" style="left:976.5px;top:1431.0px;font:normal normal 14.75px/14.75px 'Liberation Sans';color:#3f57a6;transform:scaleX(0.9913);transform-origin:0 0;">Privacy Policy</div>
<div class="t" style="left:976.5px;top:1464.0px;font:normal normal 14.75px/14.75px 'Liberation Sans';color:#3f57a6;transform:scaleX(0.9774);transform-origin:0 0;">Restricted Data Use</div>
<div class="t" style="left:976.5px;top:1498.0px;font:normal normal 14.75px/14.75px 'Liberation Sans';color:#3f57a6;transform:scaleX(1.0270);transform-origin:0 0;">Freedom of Information Act</div>
<svg class="b" style="left:1162.6px;top:1500.6px;" width="11.3" height="11.3" viewBox="0 0 11.3 11.3"><path d="M4.32 0.65 H0.65 V10.15 H10.15 V6.05" fill="none" stroke="#3f57a6" stroke-width="1.25"/><path d="M3.24 7.56 L9.29 1.51" fill="none" stroke="#3f57a6" stroke-width="1.25"/><path d="M6.05 0 H10.80 V4.75 Z" fill="#3f57a6"/></svg>
<div class="t" style="left:976.5px;top:1533.0px;font:normal normal 14.75px/14.75px 'Liberation Sans';color:#3f57a6;transform:scaleX(1.0021);transform-origin:0 0;">Accessibility</div>
<div class="t" style="left:1224.3px;top:1362.0px;font:normal bold 16.59px/16.59px 'Liberation Sans';color:#1b1b1b;transform:scaleX(0.9548);transform-origin:0 0;">Customer Service</div>
<div class="t" style="left:1224.3px;top:1397.0px;font:normal normal 14.75px/14.75px 'Liberation Sans';color:#3f57a6;transform:scaleX(1.0219);transform-origin:0 0;">Help</div>
<div class="t" style="left:1224.3px;top:1431.0px;font:normal normal 14.75px/14.75px 'Liberation Sans';color:#3f57a6;transform:scaleX(0.9945);transform-origin:0 0;">Check Entity Status</div>
<div class="t" style="left:1224.3px;top:1464.0px;font:normal normal 14.75px/14.75px 'Liberation Sans';color:#3f57a6;transform:scaleX(0.9681);transform-origin:0 0;">Federal Service Desk</div>
<svg class="b" style="left:1364.7px;top:1466.5px;" width="11.3" height="11.3" viewBox="0 0 11.3 11.3"><path d="M4.32 0.65 H0.65 V10.15 H10.15 V6.05" fill="none" stroke="#3f57a6" stroke-width="1.25"/><path d="M3.24 7.56 L9.29 1.51" fill="none" stroke="#3f57a6" stroke-width="1.25"/><path d="M6.05 0 H10.80 V4.75 Z" fill="#3f57a6"/></svg>
<div class="t" style="left:1224.3px;top:1499.0px;font:normal normal 14.75px/14.75px 'Liberation Sans';color:#3f57a6;transform:scaleX(0.9688);transform-origin:0 0;">External Resources</div>
<div class="t" style="left:1224.3px;top:1533.0px;font:normal normal 14.75px/14.75px 'Liberation Sans';color:#3f57a6;transform:scaleX(1.0170);transform-origin:0 0;">Contact</div>
<svg class="b" style="left:480.0px;top:1577.0px;" width="72.0" height="72.0" viewBox="0 0 72.0 72.0"><rect width="72" height="72" fill="#235192"/><text x="4.8" y="60" font-family="Liberation Sans" font-size="34" fill="#f4f4f0" stroke="#f4f4f0" stroke-width="0.7" textLength="38" lengthAdjust="spacingAndGlyphs">GS</text><polygon points="56.6,35.6 67.8,60.2 46,60.2" fill="#f4f4f0"/><polygon points="49.4,60.4 63,60.4 59.2,52.6 52.2,56.5" fill="#235192"/><polygon points="56.30,43.40 57.88,47.63 62.39,47.82 58.86,50.63 60.06,54.98 56.30,52.49 52.54,54.98 53.74,50.63 50.21,47.82 54.72,47.63" fill="#235192"/></svg>
<svg class="b" style="left:553.5px;top:1576.5px;" width="7.0" height="7.0" viewBox="0 0 7.0 7.0"><circle cx="3.5" cy="3.5" r="2.8" fill="none" stroke="#235192" stroke-width="0.7"/><text x="2.2" y="5.2" font-family="Liberation Sans" font-size="4" font-weight="bold" fill="#235192">R</text></svg>
<svg class="b" style="left:659.0px;top:1578.0px;" width="16.0" height="14.0" viewBox="0 0 16.0 14.0"><path d="M8 1.2 L15.2 13.2 H0.8 Z" fill="none" stroke="#333" stroke-width="1.2" stroke-linejoin="round"/><path d="M8 5 V9.5" stroke="#333" stroke-width="1.5"/><circle cx="8" cy="11.3" r="0.8" fill="#333"/></svg>
<div class="t" style="left:683.5px;top:1580.0px;font:normal bold 14.4px/14.4px 'Liberation Mono';color:#333;transform:scaleX(0.9836);transform-origin:0 0;">WARNING</div>
<div class="t" style="left:659.5px;top:1604.0px;font:normal normal 12.91px/12.91px 'Liberation Sans';color:#1b1b1b;transform:scaleX(0.9764);transform-origin:0 0;">This is a U.S. General Services Administration Federal Government computer system that is <b>"FOR OFFICIAL USE ONLY."</b> This system is</div>
<div class="t" style="left:659.5px;top:1622.0px;font:normal normal 12.91px/12.91px 'Liberation Sans';color:#1b1b1b;transform:scaleX(1.0350);transform-origin:0 0;">subject to monitoring. Individuals found performing unauthorized activities are subject to disciplinary action including criminal</div>
<div class="t" style="left:659.5px;top:1640.0px;font:normal normal 12.91px/12.91px 'Liberation Sans';color:#1b1b1b;transform:scaleX(1.0308);transform-origin:0 0;">prosecution.</div>
<div class="t" style="left:659.5px;top:1676.0px;font:normal normal 12.91px/12.91px 'Liberation Sans';color:#1b1b1b;transform:scaleX(1.0172);transform-origin:0 0;">This system contains Controlled Unclassified Information (CUI). All individuals viewing, reproducing or disposing of this information are</div>
<div class="t" style="left:659.5px;top:1694.0px;font:normal normal 12.91px/12.91px 'Liberation Sans';color:#1b1b1b;transform:scaleX(0.9734);transform-origin:0 0;">required to protect it in accordance with 32 CFR Part 2002 and GSA Order CIO 2103.2 CUI Policy.</div>
<div class="t" style="left:480.0px;top:1749.0px;font:normal bold 20.28px/20.28px 'Liberation Sans';color:#fff;transform:scaleX(0.9797);transform-origin:0 0;">SAM.gov</div>
<div class="t" style="left:480.0px;top:1780.0px;font:normal bold 20.28px/20.28px 'Liberation Sans';color:#fff;transform:scaleX(1.0197);transform-origin:0 0;">An official website of the U.S. General Services Administration</div>
</body></html>
